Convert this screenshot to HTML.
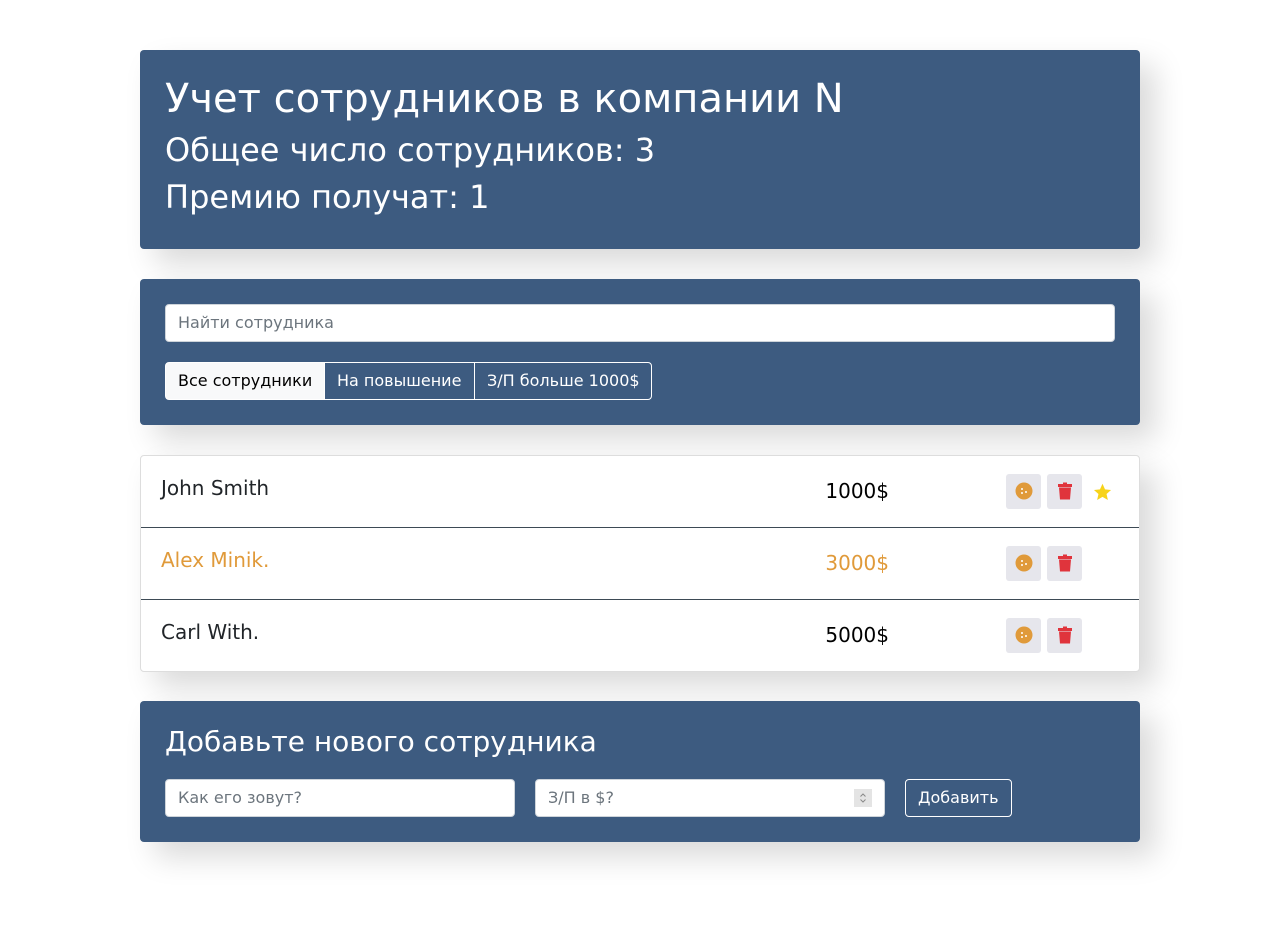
<!DOCTYPE html>
<html><head><meta charset="utf-8"><style>
*{box-sizing:border-box;margin:0;padding:0}
body{width:1280px;height:939px;background:#fff;font-family:"DejaVu Sans","Liberation Sans",sans-serif;position:relative;overflow:hidden}
.panel{position:absolute;left:140px;width:1000px;background:#3d5b80;border-radius:4px;box-shadow:15px 15px 30px rgba(0,0,0,.15);color:#fff}
.panel div{white-space:nowrap}
.inp{position:absolute;height:38px;background:#fff;border:1px solid #ced4da;border-radius:4px;color:#6c757d;font-size:16px;line-height:36px;padding-left:12px}
.btn{position:absolute;top:0;height:38px;line-height:36px;font-size:16px;padding:0 12px;border:1px solid #fff;white-space:nowrap}
.row{position:absolute;left:0;width:998px;height:72px;border-bottom:1px solid #3d4a55}
.name{position:absolute;left:20px;top:20px;font-size:20px;color:#212529}
.sal{position:absolute;right:250px;top:23px;font-size:20px;color:#000}
.ib{position:absolute;top:18px;width:35px;height:35px;background:#e6e6ec;border-radius:3px}
.ib svg{position:absolute;left:9px;top:8px}
</style></head><body>
<div class="panel" style="top:50px;height:199px">
<div style="position:absolute;left:25px;top:25px;font-size:40px;line-height:48px">Учет сотрудников в компании N</div>
<div style="position:absolute;left:25px;top:80px;font-size:32px;line-height:40px">Общее число сотрудников: 3</div>
<div style="position:absolute;left:25px;top:127px;font-size:32px;line-height:40px">Премию получат: 1</div>
</div>
<div class="panel" style="top:279px;height:146px">
<div class="inp" style="left:25px;top:25px;width:950px">Найти сотрудника</div>
<div style="position:absolute;left:25px;top:83px;height:38px">
<div class="btn" style="left:0;background:#f8f9fa;color:#000;border-radius:4px 0 0 4px;width:160px">Все сотрудники</div>
<div class="btn" style="left:159px;color:#fff;width:151px">На повышение</div>
<div class="btn" style="left:309px;color:#fff;border-radius:0 4px 4px 0;width:178px">З/П больше 1000$</div>
</div>
</div>
<div style="position:absolute;left:140px;top:455px;width:1000px;height:217px;border:1px solid #ddd;border-radius:4px;background:#fff;box-shadow:15px 15px 30px rgba(0,0,0,.15);overflow:hidden">
<div class="row" style="top:0"><div class="name">John Smith</div><div class="sal">1000$</div>
<div class="ib" style="left:865px"><svg width="18" height="18" viewBox="0 0 18 18"><circle cx="9" cy="9" r="8.5" fill="#e09a3a"/><circle cx="7" cy="7" r="1" fill="#fff"/><circle cx="11" cy="10" r="1" fill="#fff"/><circle cx="7" cy="11" r="1" fill="#fff"/></svg></div>
<div class="ib" style="left:906px"><svg width="18" height="18" viewBox="0 0 18 18"><rect x="2" y="2" width="14" height="3" fill="#e0343c"/><rect x="7" y="0.5" width="4" height="2" fill="#e0343c"/><path d="M3 5.5h12l-1 12H4z" fill="#e0343c"/></svg></div>
<svg style="position:absolute;left:952px;top:27px" width="19" height="19" viewBox="0 0 24 24"><path d="M12 1l3.2 7 7.6.8-5.7 5.1 1.7 7.6L12 17.6 5.2 21.5l1.7-7.6L1.2 8.8 8.8 8z" fill="#f7d31a"/></svg>
</div>
<div class="row" style="top:72px"><div class="name" style="color:#e09a3a">Alex Minik.</div><div class="sal" style="color:#e09a3a">3000$</div>
<div class="ib" style="left:865px"><svg width="18" height="18" viewBox="0 0 18 18"><circle cx="9" cy="9" r="8.5" fill="#e09a3a"/><circle cx="7" cy="7" r="1" fill="#fff"/><circle cx="11" cy="10" r="1" fill="#fff"/><circle cx="7" cy="11" r="1" fill="#fff"/></svg></div>
<div class="ib" style="left:906px"><svg width="18" height="18" viewBox="0 0 18 18"><rect x="2" y="2" width="14" height="3" fill="#e0343c"/><rect x="7" y="0.5" width="4" height="2" fill="#e0343c"/><path d="M3 5.5h12l-1 12H4z" fill="#e0343c"/></svg></div>
</div>
<div class="row" style="top:144px;border-bottom:none"><div class="name">Carl With.</div><div class="sal">5000$</div>
<div class="ib" style="left:865px"><svg width="18" height="18" viewBox="0 0 18 18"><circle cx="9" cy="9" r="8.5" fill="#e09a3a"/><circle cx="7" cy="7" r="1" fill="#fff"/><circle cx="11" cy="10" r="1" fill="#fff"/><circle cx="7" cy="11" r="1" fill="#fff"/></svg></div>
<div class="ib" style="left:906px"><svg width="18" height="18" viewBox="0 0 18 18"><rect x="2" y="2" width="14" height="3" fill="#e0343c"/><rect x="7" y="0.5" width="4" height="2" fill="#e0343c"/><path d="M3 5.5h12l-1 12H4z" fill="#e0343c"/></svg></div>
</div>
</div>
<div class="panel" style="top:701px;height:141px">
<div style="position:absolute;left:25px;top:24px;font-size:28px;line-height:34px">Добавьте нового сотрудника</div>
<div class="inp" style="left:25px;top:78px;width:350px">Как его зовут?</div>
<div class="inp" style="left:395px;top:78px;width:350px">З/П в $?<svg style="position:absolute;right:12px;top:9px" width="18" height="18" viewBox="0 0 18 18"><rect width="18" height="18" fill="#e4e4e4"/><path d="M6.5 7.5L9 5l2.5 2.5M6.5 10.5L9 13l2.5-2.5" stroke="#888" fill="none" stroke-width="1"/></svg></div>
<div class="btn" style="left:765px;top:78px;color:#fff;border-radius:4px;width:107px">Добавить</div>
</div>
</body></html>
